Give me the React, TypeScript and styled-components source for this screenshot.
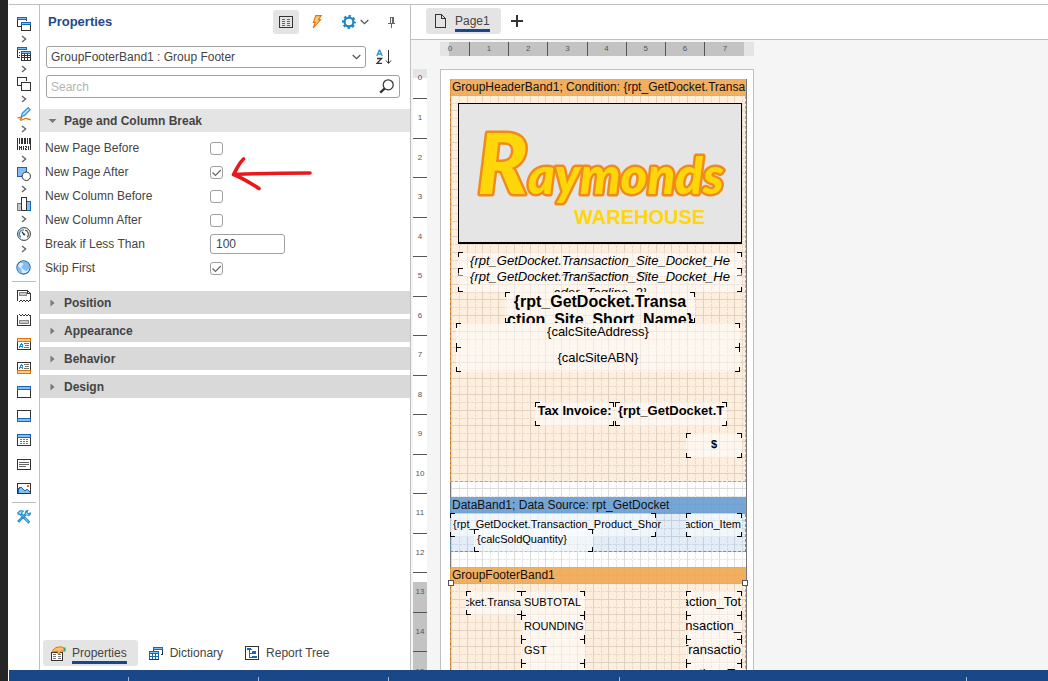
import React from 'react';
import styled, { createGlobalStyle, css } from 'styled-components';

const GlobalStyle = createGlobalStyle`
  *, *::before, *::after { box-sizing: border-box; }
  body { margin: 0; font-family: "Liberation Sans", Arial, sans-serif; font-size: 12px; color: #444; }
  button, input, select { font: inherit; color: inherit; }
`;

/* ---------- shell ---------- */

const Shell = styled.div`
  display: flex;
  flex-direction: column;
  height: 100vh;
  padding: 4px 0 0 1px;
  border-left: 8px solid #262626;
  background: #fff;
  overflow: hidden;
`;

const Workspace = styled.div`
  display: flex;
  flex: 1;
  min-height: 0;
  border-top: 1px solid #c0c0c0;
`;

const StatusBar = styled.footer`
  display: flex;
  flex: none;
  height: 11px;
  padding-top: 7px;
  background: #1a4788;
`;

const StatusCell = styled.div<{ $width: number }>`
  flex: none;
  width: ${(p) => p.$width}px;
  border-right: 1px solid #a9b9d3;
`;

/* ---------- toolbox ---------- */

const Toolbox = styled.nav`
  display: flex;
  flex-direction: column;
  align-items: center;
  flex: none;
  width: 31px;
  padding: 10px 4px 0 3px;
  border-right: 1px solid #c0c0c0;
`;

const ToolButton = styled.button<{ $height: number }>`
  display: flex;
  align-items: center;
  justify-content: center;
  flex: none;
  width: 24px;
  height: ${(p) => p.$height}px;
  padding: 0;
  border: 0;
  background: none;
`;

const ToolRule = styled.hr`
  width: 24px;
  height: 1px;
  margin: 2px 0;
  border: 0;
  background: #bdbdbd;
  flex: none;
`;

/* ---------- properties panel ---------- */

const Panel = styled.aside`
  display: flex;
  flex-direction: column;
  flex: none;
  width: 371px;
  border-right: 1px solid #c0c0c0;
`;

const PanelHeader = styled.header`
  display: flex;
  align-items: center;
  height: 34px;
  padding: 0 1px 0 8px;
`;

const PanelTitle = styled.h1`
  flex: 1;
  margin: 0;
  font-size: 13px;
  line-height: 16px;
  color: #1f4a8c;
`;

const IconButton = styled.button<{ $active?: boolean; $width: number }>`
  display: flex;
  align-items: center;
  justify-content: center;
  gap: 4px;
  width: ${(p) => p.$width}px;
  height: 24px;
  padding: 0;
  border: 0;
  border-radius: 3px;
  background: ${(p) => (p.$active ? '#e4e4e4' : 'none')};
`;

const PickerRow = styled.div`
  display: flex;
  align-items: center;
  gap: 6px;
  margin: 6px 14px 6px 6px;
`;

const SelectBox = styled.div`
  position: relative;
  flex: 1;
`;

const SelectInput = styled.select`
  appearance: none;
  display: block;
  width: 100%;
  height: 22px;
  padding: 0 4px;
  border: 1px solid #a0a0a0;
  border-radius: 3px;
  background: #fff;
`;

const SelectChevron = styled.span`
  position: absolute;
  right: 5px;
  top: 8px;
  display: flex;
  pointer-events: none;
`;

const SearchBox = styled.label`
  display: flex;
  align-items: center;
  height: 23px;
  margin: 0 10px 11px 6px;
  padding: 0 5px 0 4px;
  border: 1px solid #a0a0a0;
  border-radius: 3px;
`;

const SearchInput = styled.input`
  flex: 1;
  min-width: 0;
  padding: 0;
  border: 0;
  outline: 0;
  background: none;
  &::placeholder { color: #b4b4b4; opacity: 1; }
`;

const GroupButton = styled.button<{ $open?: boolean }>`
  display: flex;
  align-items: center;
  gap: 7px;
  flex: none;
  width: 100%;
  height: 23px;
  margin-bottom: ${(p) => (p.$open ? 4 : 5)}px;
  padding: 0 8px;
  border: 0;
  background: ${(p) => (p.$open ? '#e4e4e4' : '#d9d9d9')};
  font-weight: bold;
  text-align: left;
`;

const Fields = styled.div`
  margin-bottom: 11px;
`;

const Field = styled.label`
  display: grid;
  grid-template-columns: 165px 1fr;
  align-items: center;
  height: 24px;
  padding-left: 5px;
`;

const CheckWrap = styled.span`
  position: relative;
  display: flex;
  width: 13px;
`;

const CheckInput = styled.input`
  appearance: none;
  width: 13px;
  height: 13px;
  margin: 0;
  border: 1px solid #a0a0a0;
  border-radius: 3px;
  background: #fff;
  & + svg { display: none; }
  &:checked + svg { display: block; }
`;

const overlay = css`
  position: absolute;
  pointer-events: none;
`;

const CheckMark = styled.svg`
  ${overlay}
  left: 0;
  top: 0;
`;

const Annotation = styled.svg`
  ${overlay}
  left: 20px;
  top: -10px;
`;

const NumberInput = styled.input`
  width: 75px;
  height: 20px;
  padding: 0 5px;
  border: 1px solid #a0a0a0;
  border-radius: 3px;
`;

const PanelTabs = styled.div`
  display: flex;
  gap: 3px;
  margin-top: auto;
  padding: 0 3px 4px;
`;

const Tab = styled.button<{ $active?: boolean; $roomy?: boolean }>`
  display: flex;
  align-items: center;
  gap: ${(p) => (p.$roomy ? 9 : 6)}px;
  height: 26px;
  padding: 0 11px 0 ${(p) => (p.$roomy ? 9 : 8)}px;
  border: 0;
  border-radius: 3px;
  background: ${(p) => (p.$active ? '#e4e4e4' : 'none')};
`;

const TabText = styled.span<{ $active?: boolean }>`
  line-height: 16px;
  padding: 3px 0 0;
  border-bottom: 3px solid ${(p) => (p.$active ? '#1a4788' : 'transparent')};
`;

/* ---------- designer ---------- */

const Designer = styled.main`
  display: flex;
  flex-direction: column;
  flex: 1;
  min-width: 0;
  background: #f5f5f5;
`;

const PageTabs = styled.div`
  display: flex;
  align-items: center;
  gap: 10px;
  flex: none;
  height: 35px;
  padding: 0 15px 2px;
  border-bottom: 1px solid #c0c0c0;
  background: #fff;
`;

const PlainButton = styled.button`
  display: flex;
  padding: 0;
  border: 0;
  background: none;
`;

const Surface = styled.div`
  display: grid;
  grid-template-columns: 14px 314px;
  grid-template-rows: 14px minmax(0, 1fr);
  gap: 13px;
  flex: 1;
  min-height: 0;
  padding: 2px 0 0 2px;
  overflow: hidden;
`;

const RulerX = styled.div`
  grid-column: 2;
  display: grid;
  grid-template-columns: 30px repeat(6, minmax(0, 1fr)) 49px;
  background: linear-gradient(90deg, #e4e4e4 9px, #c3c3c3 9px 304px, #e4e4e4 304px);
`;

const RulerY = styled.div`
  grid-column: 1;
  grid-row: 2;
  display: grid;
  grid-template-rows: 30px repeat(14, 1fr) 40px;
  height: 623px;
  background: linear-gradient(#e4e4e4 9px, #fff 9px 513px, #c3c3c3 513px);
`;

const Mark = styled.span<{ $axis: 'x' | 'y'; $first?: boolean; $last?: boolean }>`
  display: flex;
  align-items: center;
  justify-content: center;
  font-size: 8px;
  line-height: 12px;
  color: #555;
  ${(p) => (p.$axis === 'x'
    ? css`
        border-right: ${p.$last ? 0 : 1}px solid #555;
        padding-right: ${p.$first || p.$last ? 9 : 0}px;
      `
    : css`
        border-bottom: 1px solid #555;
        padding-bottom: ${p.$first ? 11 : 0}px;
      `)}
`;

const Paper = styled.div`
  grid-column: 2;
  grid-row: 2;
  height: 660px;
  padding: 9px 6px 0 9px;
  border: 1px solid #c0c0c0;
  background: #fff;
`;

const Sheet = styled.div`
  position: relative;
  height: 100%;
  border: solid #777;
  border-width: 0 1px;
`;

const GridLines = styled.svg`
  position: absolute;
  inset: 0;
  width: 100%;
  height: 100%;
`;

type Tone = 'orange' | 'blue';
const tones = {
  orange: { title: 'rgba(241, 160, 65, 0.84)', body: 'rgba(244, 165, 80, 0.19)', line: '#ee9a35' },
  blue: { title: 'rgba(91, 149, 206, 0.84)', body: 'rgba(91, 149, 206, 0.17)', line: '#5b95ce' },
};

const Band = styled.section<{ $gap: number }>`
  position: relative;
  margin: 0 0 ${(p) => p.$gap}px -1px;
`;

const BandTitle = styled.h2<{ $tone: Tone }>`
  height: 17px;
  margin: 0;
  padding-left: 2px;
  overflow: hidden;
  background: ${(p) => tones[p.$tone].title};
  font-size: 12px;
  font-weight: normal;
  line-height: 17px;
  white-space: nowrap;
  color: #111;
`;

const BandBody = styled.div<{ $tone: Tone; $height: number }>`
  position: relative;
  height: ${(p) => p.$height}px;
  border: 1px dashed ${(p) => tones[p.$tone].line};
  border-top: 0;
  background: ${(p) => tones[p.$tone].body};
`;

const Handle = styled.span<{ $side: 'left' | 'right' }>`
  position: absolute;
  top: 13px;
  ${(p) => p.$side}: -2px;
  z-index: 1;
  width: 6px;
  height: 6px;
  border: 1px solid #555;
  background: #fff;
`;

interface BoxProps {
  $x: number; $y: number; $w: number; $h: number;
  $size?: number; $lh?: number; $bold?: boolean; $italic?: boolean; $spill?: boolean;
  $align?: 'left' | 'center' | 'right'; $valign?: 'top' | 'middle';
}

const k = 'linear-gradient(#000, #000)';

/* A report component: translucent fill with bracket marks on its corners. */
const Box = styled.div<BoxProps>`
  position: absolute;
  left: ${(p) => p.$x - 1}px;
  top: ${(p) => p.$y}px;
  display: flex;
  flex-direction: column;
  align-items: ${(p) => (p.$align === 'center' ? 'center' : p.$align === 'right' ? 'flex-end' : 'flex-start')};
  justify-content: ${(p) => (p.$valign === 'top' ? 'flex-start' : 'center')};
  width: ${(p) => p.$w}px;
  height: ${(p) => p.$h}px;
  padding: 1px 1px 4px ${(p) => (p.$align === 'left' ? 3 : 1)}px;
  overflow: ${(p) => (p.$spill ? 'visible' : 'hidden')};
  font-size: ${(p) => p.$size ?? 11}px;
  line-height: ${(p) => p.$lh ?? 16}px;
  font-weight: ${(p) => (p.$bold ? 'bold' : 'normal')};
  font-style: ${(p) => (p.$italic ? 'italic' : 'normal')};
  white-space: nowrap;
  color: #000;
  background:
    ${k} 0 0 / 5px 1px, ${k} 0 0 / 1px 5px,
    ${k} 100% 0 / 5px 1px, ${k} 100% 0 / 1px 5px,
    ${k} 0 100% / 5px 1px, ${k} 0 100% / 1px 5px,
    ${k} 100% 100% / 5px 1px, ${k} 100% 100% / 1px 5px,
    rgba(255, 255, 255, 0.5);
  background-repeat: no-repeat;
`;

const LogoBox = styled.div`
  position: absolute;
  left: 7px;
  top: 7px;
  width: 284px;
  height: 141px;
  border: 1px solid #000;
  border-bottom-width: 2px;
  background: #e5e5e5;
`;

/* ---------- icons ---------- */

const D = '#333';
const B = '#1468b4';
const L = '#86bdf0';
const O = '#e0720f';

type IconProps = { children: React.ReactNode; w?: number; h?: number; soft?: boolean };
const Icon = ({ children, w = 14, h = 14, soft }: IconProps) => (
  <svg width={w} height={h} viewBox={`0 0 ${w} ${h}`} fill="none" shapeRendering={soft ? 'auto' : 'crispEdges'} aria-hidden="true">
    {children}
  </svg>
);

const ChevronRight = () => (
  <Icon w={6} h={8} soft><path d="M1 1l3.600 3L1 7" stroke="#666" strokeWidth="1.400" /></Icon>
);
const ChevronDown = () => (
  <Icon w={9} h={6} soft><path d="M.7 1l3.800 3.600L8.300 1" stroke="#555" strokeWidth="1.300" /></Icon>
);

const BandsIcon = () => (
  <Icon>
    <path d="M4 9.500H.5V.5H9.500V4" stroke={D} />
    <path d="M0 0h10v3H0z" fill={B} /><path d="M1 1h8v1H1z" fill={L} />
    <path d="M4.500 5.500h9v8h-9z" fill="#fff" stroke={D} />
    <path d="M4 5h10v3H4z" fill={B} /><path d="M5 6h8v1H5z" fill={L} />
  </Icon>
);
const CrossBandsIcon = () => (
  <Icon>
    <path d="M.5 3v7M3 10.500H0M2 5.500h1M2 8.500h1" stroke={D} />
    <path d="M0 0h10v3H0z" fill={B} /><path d="M1 1h8v1H1z" fill={L} />
    <path d="M4 4h10v10H4z" fill={D} /><path d="M4 4h10v3H4z" fill={B} /><path d="M5 5h8v1H5z" fill={L} />
    <path d="M5 7h2v1H5zM8 7h2v1H8zM11 7h2v1h-2zM5 9h2v1H5zM8 9h2v1H8zM11 9h2v1h-2zM5 11h2v2H5zM8 11h2v2H8zM11 11h2v2h-2z" fill="#fff" />
  </Icon>
);
const ComponentsIcon = () => (
  <Icon><path d="M4 8.500H.5V.5H9.500V4" stroke={D} /><path d="M4.500 5.500h9v8h-9z" stroke={D} /></Icon>
);
const PenIcon = () => (
  <Icon soft>
    <path d="M4.500 9.300l.7-3L11.200.7l2 2-6 5.900z" fill="#bfe0f5" stroke="#2b92cf" strokeWidth="1.200" />
    <path d="M.5 11c3-1 4.800-.8 4 .2-1 1-2 1.800-.8 2 2 .3 3.500-2.200 5.500-1.900 1.600.2 1.700 1.400 4.500 1.200" stroke={O} strokeWidth="1.300" />
  </Icon>
);
const BarcodeIcon = () => (
  <Icon h={12}>
    <path d="M.5 0v12M2.500 0v6M5.500 0v6M8.500 0v6M10.500 0v6M13.500 0v12M2.500 8v4M4.500 8v4M2 9.500h2M6.500 8v4M8 8.500h2M9.500 8v2M8.500 10v2M8 11.500h2M11 8.500h1M11.500 8v4" stroke={D} />
    <path d="M4 0v6M7 0v6M12 0v6" stroke={D} />
  </Icon>
);
const ShapesIcon = () => (
  <Icon soft>
    <path d="M.5.5h9v9h-9z" fill={L} stroke={B} shapeRendering="crispEdges" />
    <circle cx="9.300" cy="9.300" r="4.200" fill="#fff" stroke={D} />
  </Icon>
);
const ChartIcon = () => (
  <Icon>
    <path d="M.5 6.500h4v7h-4z" fill="#c8c8c8" stroke="#777" />
    <path d="M9.500 4.500h4v9h-4z" fill={L} stroke={B} />
    <path d="M4.500.5h5v13h-5z" fill="#fff" stroke={D} />
  </Icon>
);
const GaugeIcon = () => (
  <Icon soft>
    <circle cx="7" cy="7" r="6.400" stroke={D} />
    <path d="M4 10.200A4 4 0 0 1 7 3" stroke="#2b92cf" strokeWidth="1.300" />
    <path d="M8 3.200a4 4 0 0 1 2 7" stroke="#555" strokeWidth="1.200" />
    <path d="M5 4.600l2 3" stroke={D} strokeWidth="1.200" /><circle cx="7.200" cy="7.600" r="1" fill={D} />
  </Icon>
);
const GlobeIcon = () => (
  <Icon w={15} h={15} soft>
    <circle cx="7.500" cy="7.500" r="6.600" fill="#dceefa" stroke={B} strokeWidth="1.200" />
    <path d="M4 2.200c3-1.500 6-1 8.300 1.500 1.500 2 1.500 4 .7 5.500-2 .5-2 2.500-4 1.500-1-2-4-1.500-3.500-4C6 5 8 5 7 3.500c-1-.5-2 0-3-1.300zM1.500 6c2 .5 3 2.500 4 3.500.5 1.500 0 2.500 1 4C3 13.500.7 10 1.500 6z" fill={L} />
  </Icon>
);

const TitleBandIcon = () => (
  <Icon h={12}>
    <path d="M.5 11V.5H10.500l3 3V11" stroke={D} /><path d="M10.500 0v3.500H14" stroke={D} />
    <path d="M2.500 2.500h7v3h-7z" fill="#c8c8c8" stroke="#888" />
    <path d="M0 10.500h1M2 11.500h1M3 10.500h2M5 11.500h1M6 10.500h2M8 11.500h1M9 10.500h2M11 11.500h1M12 10.500h2" stroke={D} />
  </Icon>
);
const SummaryBandIcon = () => (
  <Icon h={12}>
    <path d="M.5 1v10.500h13V1" stroke={D} />
    <path d="M0 1.500h1M2 .5h1M3 1.500h2M5 .5h1M6 1.500h2M8 .5h1M9 1.500h2M11 .5h1M12 1.500h2" stroke={D} />
    <path d="M2.500 6.500h9v3h-9z" fill="#c8c8c8" stroke="#888" />
  </Icon>
);
const CardIcon = ({ foot }: { foot?: boolean }) => (
  <Icon h={12}>
    <path d="M.5.5h13v11H.5z" stroke={D} />
    <path d={foot ? 'M.5 8.500h13v3H.5z' : 'M.5.5h13v3H.5z'} fill="#fcd38a" stroke={O} />
    <g transform={foot ? 'translate(0 -3)' : undefined}>
      <path d="M7 5.500h5M8 7.500h4M7 9.500h5" stroke="#777" />
      <path d="M2.500 8v2M3.500 6v3M4.500 5v2M5.500 6v4M3 8.500h3" stroke="#2b92cf" />
    </g>
  </Icon>
);
const BarBandIcon = ({ foot }: { foot?: boolean }) => (
  <Icon h={12}>
    <path d="M.5.5h13v11H.5z" stroke={D} />
    <path d={foot ? 'M.5 8.500h13v3H.5z' : 'M.5.5h13v3H.5z'} fill={L} stroke={B} />
  </Icon>
);
const DataBandIcon = () => (
  <Icon h={12}>
    <path d="M.5.5h13v11H.5z" stroke={D} /><path d="M.5.5h13v3H.5z" fill={L} stroke={B} />
    <path d="M3 5.500h9M3 7.500h9M3 9.500h9" stroke="#777" strokeDasharray="2 1" />
  </Icon>
);
const TextIcon = () => (
  <Icon h={11}><path d="M.5.5h13v10H.5z" stroke={D} /><path d="M2 3.500h10M2 5.500h10M2 7.500h7" stroke="#666" /></Icon>
);
const ImageIcon = () => (
  <Icon h={11}>
    <path d="M1 6l3-2 4 4 2-2 3 3v1.500H1z" fill={L} stroke={B} /><path d="M10 2h2v2h-2z" fill={O} />
    <path d="M.5.5h13v10H.5z" stroke={D} />
  </Icon>
);
const ToolsIcon = () => (
  <Icon soft>
    <path d="M4.500 3.500l8 8.300-1.200 1.200-8-8.200M9.500 4.500L2 12l-1-1 7.500-7.500c-.4-1.600.6-3 2.300-3L9.800 2.500l1.500 1.500L13.300 3c.2 1.600-1.500 3-3 2.500M.8 3l2.500-2.300 3 .5-2 2 .2 1.300-1.200.5-1-1-1 .3z" fill="#d8ecf9" stroke="#2b92cf" strokeWidth="1.200" />
  </Icon>
);

const PropsListIcon = () => (
  <Icon h={12}>
    <path d="M.5.5h13v11H.5z" stroke={D} />
    <path d="M3 3.500h3M3 5.500h3M3 7.500h3M3 9.500h3M8 3.500h3M8 5.500h3M8 7.500h3M8 9.500h3" stroke="#666" />
  </Icon>
);
const BoltIcon = () => (
  <Icon w={10} soft><path d="M3.800.6h5.300L6.600 4.800h2L1.200 13l2-5.600H1.300z" fill="#fbc878" stroke={O} strokeWidth="1.100" /></Icon>
);
const GearIcon = () => (
  <Icon soft>
    <circle cx="7" cy="7" r="4.400" stroke="#2186c8" strokeWidth="2.200" />
    <circle cx="7" cy="7" r="6" stroke="#2186c8" strokeWidth="2" strokeDasharray="2.500 2.212" strokeDashoffset="1.250" />
  </Icon>
);
const PinIcon = () => (
  <Icon w={8} h={11}><path d="M2.500 0v6M5.500 0v6M2 .5h4M0 6.500h7M3.500 7v4M4.500 0v6" stroke="#666" /></Icon>
);
const SortIcon = () => (
  <svg width="16" height="16" viewBox="0 0 16 16" fill="none" aria-hidden="true">
    <path d="M.8 7L3.300 1.200h.4L6.200 7M1.700 5h3.600" stroke="#2b92cf" strokeWidth="1.300" />
    <path d="M1 9.500h4.600L1 14.400h5" stroke={D} strokeWidth="1.300" />
    <path d="M12.500 1v13" stroke={D} /><path d="M10 11.500l2.500 3 2.500-3" stroke={D} />
  </svg>
);
const SearchIcon = () => (
  <Icon w={15} h={15} soft><circle cx="9.200" cy="5.800" r="5" stroke={D} strokeWidth="1.200" /><path d="M5.800 9.400L1.200 13.600" stroke={D} strokeWidth="2.400" /></Icon>
);
const Caret = ({ open }: { open?: boolean }) => (
  <Icon w={9} h={8} soft><path d={open ? 'M.5 2h8L4.500 6z' : 'M2.500.5v7L6.500 4z'} fill="#777" /></Icon>
);

const PropertiesIcon = () => (
  <Icon w={15} h={15} soft>
    <path d="M.5 6.500h11v8H.5z" fill="#fff" stroke={D} shapeRendering="crispEdges" />
    <path d="M2 8.500h3M2 10.500h3M2 12.500h3M7 8.500h3M7 10.500h3M7 12.500h3" stroke="#777" shapeRendering="crispEdges" />
    <path d="M1.500 4.500L5 1.500 10.500.8l2.500 1.200v3L10 5l-2 3-1.500-.5.5-2.500-5 1z" fill="#fbbf6a" stroke={O} />
    <path d="M13 1.500h1.500v4H13z" fill="#3aa053" />
  </Icon>
);
const DictionaryIcon = () => (
  <Icon w={15} h={13}>
    <path d="M4.500 4V.5h9v7h-2" fill="#fff" stroke={D} /><path d="M4.500.5h9v2h-9z" fill={L} stroke={B} />
    <path d="M.5 4.500h9v8h-9z" fill="#fff" stroke={B} /><path d="M.5 4.500h9v2h-9z" fill={L} stroke={B} />
    <path d="M3.500 7v5M6.500 7v5M1 9.500h8" stroke={B} /><path d="M0 12.500h10" stroke={D} />
  </Icon>
);
const TreeIcon = () => (
  <Icon w={15}>
    <path d="M.5.5h13v13H.5z" stroke={D} />
    <path d="M2 3.500h5M4.500 4v8M5 7.500h2M5 11.500h2" stroke={B} />
    <path d="M2 2h4v2H2zM7 5h4v3H7zM7 10h5v2H7z" fill={B} />
  </Icon>
);
const PageIcon = () => (
  <Icon w={11}><path d="M.5.5h6l4 4v9H.5z" stroke={D} /><path d="M6.500.5v4h4" stroke={D} /></Icon>
);
const PlusIcon = () => <Icon w={12} h={12}><path d="M5 0h2v12H5zM0 5h12v2H0z" fill={D} /></Icon>;

/* ---------- data ---------- */

const groupTools: [string, React.ReactNode][] = [
  ['Bands', <BandsIcon />], ['Cross bands', <CrossBandsIcon />], ['Components', <ComponentsIcon />],
  ['Signatures', <PenIcon />], ['Barcodes', <BarcodeIcon />], ['Shapes', <ShapesIcon />],
  ['Charts', <ChartIcon />], ['Gauges', <GaugeIcon />],
];

const bandTools: [string, React.ReactNode][] = [
  ['Report title', <TitleBandIcon />], ['Report summary', <SummaryBandIcon />],
  ['Group header', <CardIcon />], ['Group footer', <CardIcon foot />],
  ['Header', <BarBandIcon />], ['Footer', <BarBandIcon foot />],
  ['Data', <DataBandIcon />], ['Text', <TextIcon />], ['Image', <ImageIcon />],
];

const Check = ({ checked, children }: { checked?: boolean; children?: React.ReactNode }) => (
  <CheckWrap>
    <CheckInput type="checkbox" defaultChecked={checked} />
    <CheckMark width="13" height="13" viewBox="0 0 13 13" fill="none">
      <path d="M2.500 6.500l3 3L10.800 4" stroke="#666" strokeWidth="1.200" />
    </CheckMark>
    {children}
  </CheckWrap>
);

const RedArrow = () => (
  <Annotation width="84" height="36" viewBox="0 0 84 36" fill="none">
    <path d="M80 17C60 17 30 17.500 3.500 18.500 7 13 8 8 13.500 3M3.500 18.500C13 22 20 27 29 32.500" stroke="#e8191c" strokeWidth="3.600" strokeLinecap="round" strokeLinejoin="round" />
  </Annotation>
);

const footerRows: [string, string][] = [
  ['SUBTOTAL', '{rpt_GetDocket.Transaction_Tot'],
  ['ROUNDING', '{rpt_GetDocket.Transaction_'],
  ['GST', '{rpt_GetDocket.Transactio'],
  ['TOTAL', '{rpt_GetDocket.Transaction_To'],
];

export default function App() {
  return (
    <Shell>
      <GlobalStyle />
      <Workspace>
        <Toolbox aria-label="Toolbox">
          {groupTools.map(([name, icon]) => (
            <React.Fragment key={name}>
              <ToolButton $height={18} aria-label={name}>{icon}</ToolButton>
              <ToolButton $height={12} aria-label={`${name} list`}><ChevronRight /></ToolButton>
            </React.Fragment>
          ))}
          <ToolButton $height={24} aria-label="Maps"><GlobeIcon /></ToolButton>
          <ToolRule />
          {bandTools.map(([name, icon]) => (
            <ToolButton key={name} $height={24} aria-label={name}>{icon}</ToolButton>
          ))}
          <ToolRule />
          <ToolButton $height={24} aria-label="Setup toolbox"><ToolsIcon /></ToolButton>
        </Toolbox>

        <Panel>
          <PanelHeader>
            <PanelTitle>Properties</PanelTitle>
            <IconButton $active $width={26} aria-label="Properties"><PropsListIcon /></IconButton>
            <IconButton $width={36} aria-label="Events"><BoltIcon /></IconButton>
            <IconButton $width={40} aria-label="Settings"><GearIcon /><ChevronDown /></IconButton>
            <IconButton $width={34} aria-label="Pin"><PinIcon /></IconButton>
          </PanelHeader>
          <PickerRow>
            <SelectBox>
              <SelectInput aria-label="Component">
                <option>GroupFooterBand1 : Group Footer</option>
              </SelectInput>
              <SelectChevron><ChevronDown /></SelectChevron>
            </SelectBox>
            <IconButton $width={24} aria-label="Sort alphabetically"><SortIcon /></IconButton>
          </PickerRow>
          <SearchBox>
            <SearchInput type="text" placeholder="Search" aria-label="Search" />
            <SearchIcon />
          </SearchBox>

          <GroupButton $open aria-expanded="true"><Caret open />Page and Column Break</GroupButton>
          <Fields>
            <Field>New Page Before<Check /></Field>
            <Field>New Page After<Check checked><RedArrow /></Check></Field>
            <Field>New Column Before<Check /></Field>
            <Field>New Column After<Check /></Field>
            <Field>Break if Less Than<NumberInput type="text" defaultValue="100" /></Field>
            <Field>Skip First<Check checked /></Field>
          </Fields>
          {['Position', 'Appearance', 'Behavior', 'Design'].map((name) => (
            <GroupButton key={name} aria-expanded="false"><Caret />{name}</GroupButton>
          ))}

          <PanelTabs>
            <Tab $active><PropertiesIcon /><TabText $active>Properties</TabText></Tab>
            <Tab><DictionaryIcon /><TabText>Dictionary</TabText></Tab>
            <Tab><TreeIcon /><TabText>Report Tree</TabText></Tab>
          </PanelTabs>
        </Panel>

        <Designer>
          <PageTabs>
            <Tab $active $roomy><PageIcon /><TabText $active>Page1</TabText></Tab>
            <PlainButton aria-label="New page"><PlusIcon /></PlainButton>
          </PageTabs>
          <Surface>
            <RulerX>
              {[0, 1, 2, 3, 4, 5, 6, 7].map((n) => (
                <Mark key={n} $axis="x" $first={n === 0} $last={n === 7}>{n}</Mark>
              ))}
            </RulerX>
            <RulerY>
              {Array.from({ length: 16 }, (_, n) => (
                <Mark key={n} $axis="y" $first={n === 0}>{n}</Mark>
              ))}
            </RulerY>
            <Paper>
              <Sheet>
                <GridLines aria-hidden="true" shapeRendering="crispEdges">
                  <defs>
                    <pattern id="grid" width="63" height="63" patternUnits="userSpaceOnUse">
                      <path d="M8.500 0v63M24.500 0v63M39.500 0v63M55.500 0v63M0 8.500h63M0 24.500h63M0 39.500h63M0 55.500h63" stroke="#e6e6e6" strokeDasharray="3 1" />
                      <path d="M.5 0v63M16.500 0v63M31.500 0v63M47.500 0v63M0 .5h63M0 16.500h63M0 31.500h63M0 47.500h63" stroke="#dcdcdc" />
                    </pattern>
                  </defs>
                  <rect width="100%" height="100%" fill="url(#grid)" />
                </GridLines>

                <Band $gap={15}>
                  <BandTitle $tone="orange">{'GroupHeaderBand1; Condition: {rpt_GetDocket.Transa'}</BandTitle>
                  <BandBody $tone="orange" $height={386}>
                    <LogoBox>
                      <svg width="282" height="138" viewBox="0 0 282 138" role="img" aria-label="Raymonds Warehouse">
                        <g fontFamily="Lato, sans-serif" fontWeight="900" fontStyle="italic" fill="#ffd60a" stroke="#f08a1c" strokeWidth="5" strokeLinejoin="round" paintOrder="stroke">
                          <text x="18" y="90"><tspan fontSize="84">R</tspan><tspan fontSize="51">aymonds</tspan></text>
                        </g>
                        <text x="115" y="120" fontFamily="'Liberation Sans', sans-serif" fontWeight="bold" fontSize="20" fill="#ffd60a">WAREHOUSE</text>
                      </svg>
                    </LogoBox>
                    <Box $x={8} $y={156} $w={284} $h={24} $size={13} $italic $align="center" $valign="top">
                      <span>{'{rpt_GetDocket.Transaction_Site_Docket_He'}</span>
                      <span>{'ader_Tagline_1}'}</span>
                    </Box>
                    <Box $x={8} $y={172} $w={284} $h={24} $size={13} $italic $align="center" $valign="top">
                      <span>{'{rpt_GetDocket.Transaction_Site_Docket_He'}</span>
                      <span>{'ader_Tagline_2}'}</span>
                    </Box>
                    <Box $x={55} $y={196} $w={190} $h={31} $size={16} $lh={18} $bold $align="center" $valign="top">
                      <span>{'{rpt_GetDocket.Transa'}</span>
                      <span>{'ction_Site_Short_Name}'}</span>
                    </Box>
                    <Box $x={6} $y={227} $w={284} $h={25} $size={13} $align="center" $valign="top">{'{calcSiteAddress}'}</Box>
                    <Box $x={6} $y={251} $w={284} $h={25} $size={13} $align="center">{'{calcSiteABN}'}</Box>
                    <Box $x={85} $y={306} $w={79} $h={24} $size={13} $bold $align="center" $valign="top">Tax Invoice:</Box>
                    <Box $x={165} $y={306} $w={112} $h={24} $size={13} $bold $align="left" $valign="top">{'{rpt_GetDocket.T'}</Box>
                    <Box $x={236} $y={337} $w={56} $h={25} $bold $align="center">$</Box>
                  </BandBody>
                </Band>

                <Band $gap={15}>
                  <BandTitle $tone="blue">DataBand1; Data Source: rpt_GetDocket</BandTitle>
                  <BandBody $tone="blue" $height={38}>
                    <Box $x={0} $y={-1} $w={206} $h={24} $align="left" $spill>{'{rpt_GetDocket.Transaction_Product_Shor'}</Box>
                    <Box $x={236} $y={-1} $w={56} $h={24} $align="right">action_Item</Box>
                    <Box $x={24} $y={15} $w={119} $h={23} $align="left">{'{calcSoldQuantity}'}</Box>
                  </BandBody>
                </Band>

                <Band $gap={0}>
                  <BandTitle $tone="orange">GroupFooterBand1</BandTitle>
                  <Handle $side="left" />
                  <Handle $side="right" />
                  <BandBody $tone="orange" $height={120}>
                    <Box $x={16} $y={7} $w={56} $h={24} $align="right">ocket.Transa</Box>
                    {footerRows.map(([label, value], i) => (
                      <React.Fragment key={label}>
                        <Box $x={71} $y={7 + i * 24} $w={64} $h={25} $align="left">{label}</Box>
                        <Box $x={236} $y={7 + i * 24} $w={56} $h={25} $size={13} $align="right">{value}</Box>
                      </React.Fragment>
                    ))}
                  </BandBody>
                </Band>
              </Sheet>
            </Paper>
          </Surface>
        </Designer>
      </Workspace>
      <StatusBar>
        {[120, 130, 130, 231, 347].map((w, i) => <StatusCell key={i} $width={w} />)}
      </StatusBar>
    </Shell>
  );
}
